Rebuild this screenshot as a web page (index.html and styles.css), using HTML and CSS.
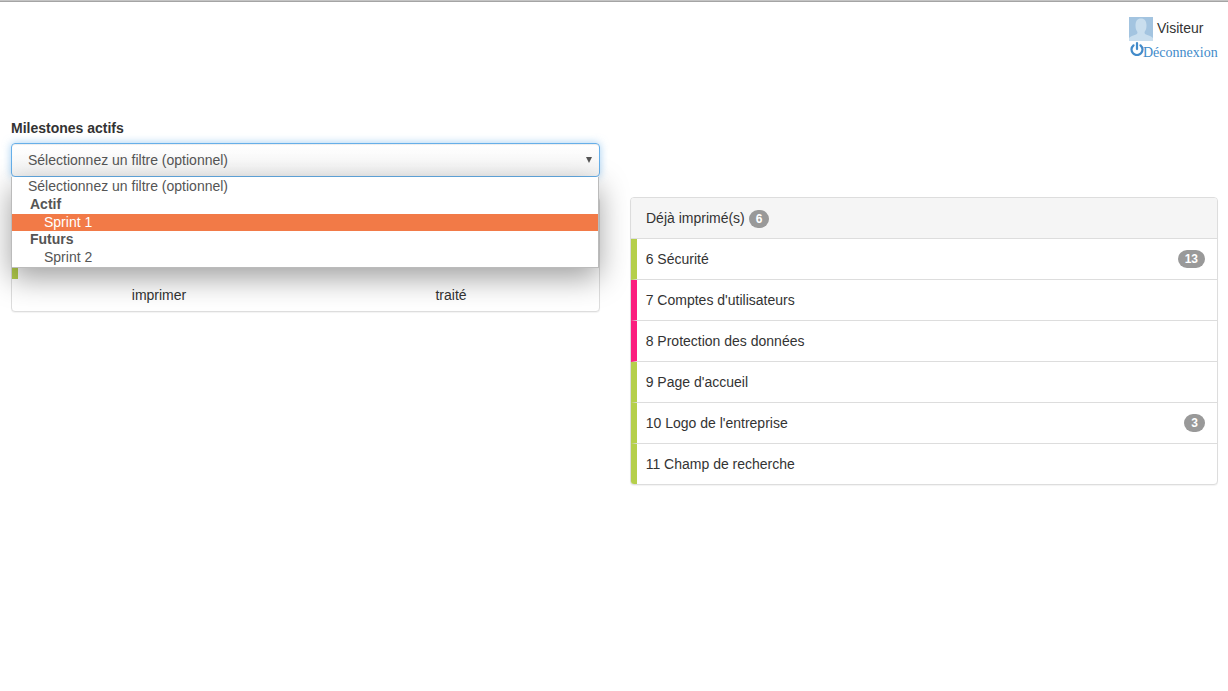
FILE: index.html
```html
<!DOCTYPE html>
<html lang="fr">
<head>
<meta charset="utf-8">
<title>Milestones</title>
<link rel="stylesheet" href="styles.css">
</head>
<body>
<header class="top">
  <div class="user">
    <div class="user-row">
      <svg class="avatar" viewBox="0 0 24 24" width="24" height="24"><rect width="24" height="24" fill="#a3c4e0"/><path d="M0 24v-3c1-1.500 4.500-2.500 7-3.500 1.500-.6 1.700-2 1.200-3C7 13 6.500 11 6.500 8.500 6.500 4 8.500 1.500 12 1.500s5.500 2.500 5.500 7c0 2.500-.5 4.500-1.700 6-.5 1-.3 2.400 1.200 3 2.500 1 6 2 7 3.500v3z" fill="#c9deee"/></svg>
      <span class="user-name">Visiteur</span>
    </div>
    <a class="logout" href="#"><svg class="power" viewBox="0 0 14 14" width="14" height="14"><path d="M3.500 3.300a5.500 5.500 0 1 0 7 0" fill="none" stroke="#428bca" stroke-width="2.200" stroke-linecap="round"/><path d="M7 1.100v6" fill="none" stroke="#428bca" stroke-width="2.200" stroke-linecap="round"/></svg>Déconnexion</a>
  </div>
</header>
<main class="columns">
  <section class="left">
    <label class="field-label">Milestones actifs</label>
    <div class="select-wrap">
      <div class="select">
        <span>Sélectionnez un filtre (optionnel)</span>
        <span class="caret"></span>
      </div>
      <ul class="dropdown">
        <li class="opt">Sélectionnez un filtre (optionnel)</li>
        <li class="group">Actif</li>
        <li class="opt sub active">Sprint 1</li>
        <li class="group">Futurs</li>
        <li class="opt sub">Sprint 2</li>
      </ul>
    </div>
    <div class="panel left-panel">
      <div class="left-body"><span class="left-bar"></span></div>
      <div class="left-foot"><span>imprimer</span><span>traité</span></div>
    </div>
  </section>
  <section class="right">
    <div class="panel">
      <div class="panel-head">Déjà imprimé(s) <span class="badge">6</span></div>
      <ul class="items">
        <li class="item green"><span>6 Sécurité</span><span class="badge">13</span></li>
        <li class="item pink"><span>7 Comptes d'utilisateurs</span></li>
        <li class="item pink"><span>8 Protection des données</span></li>
        <li class="item green"><span>9 Page d'accueil</span></li>
        <li class="item green"><span>10 Logo de l'entreprise</span><span class="badge">3</span></li>
        <li class="item green"><span>11 Champ de recherche</span></li>
      </ul>
    </div>
  </section>
</main>
</body>
</html>
```
FILE: styles.css
```css
* { box-sizing: border-box; }
html, body { margin: 0; padding: 0; }
body {
  height: 691px;
  overflow: hidden;
  background: #fff;
  color: #333;
  font: 14px/20px "Liberation Sans", Arial, sans-serif;
  border-top: 1px solid #c4c4c4;
}
.top {
  height: 114px;
  display: flex;
  justify-content: flex-end;
  padding: 15px 10px 0 0;
  border-top: 1px solid #a4a4a4;
}
.user { width: 89px; }
.user-row { display: flex; align-items: center; gap: 4px; height: 24px; }
.user-name { padding-bottom: 2px; }
.avatar { display: block; flex: none; }
.logout {
  display: flex;
  align-items: flex-start;
  color: #428bca;
  text-decoration: none;
  font-family: "Liberation Serif", serif;
  font-size: 14px;
  height: 20px;
  margin-top: 2px;
}
.power { flex: none; margin: -1px -1px 0 1px; }
.columns {
  display: grid;
  grid-template-columns: 589px 588px;
  column-gap: 30px;
  padding-left: 11px;
}
.left, .right { min-width: 0; }
.field-label { display: block; font-weight: 700; height: 28px; padding-top: 3px; }
.select-wrap { position: relative; height: 34px; }
.select {
  height: 34px;
  display: flex;
  align-items: center;
  justify-content: space-between;
  padding: 0 7px 0 16px;
  color: #555;
  border: 1px solid #66afe9;
  border-radius: 4px;
  background: linear-gradient(#fff, #f4f4f4);
  box-shadow: inset 0 1px 1px rgba(0,0,0,.075), 0 0 8px rgba(102,175,233,.6);
}
.caret {
  width: 0;
  height: 0;
  border-left: 3px solid transparent;
  border-right: 3px solid transparent;
  border-top: 6px solid #555;
}
.dropdown {
  position: absolute;
  z-index: 2;
  left: 0;
  right: 1px;
  top: 34px;
  margin: 0;
  padding: 1px 0 0;
  list-style: none;
  background: #fff;
  color: #555;
  border: 1px solid #bbb;
  border-top: 0;
  box-shadow: 0 10px 30px rgba(0,0,0,.38);
  height: 91px;
}
.opt, .group { height: 18px; line-height: 17px; padding-left: 16px; }
.group { padding-left: 18px; font-weight: 700; }
.sub { padding-left: 32px; }
.active { height: 17px; background: #f27a47; color: #fff; }
.panel {
  background: #fff;
  border: 1px solid #ddd;
  border-radius: 4px;
  box-shadow: 0 1px 1px rgba(0,0,0,.05);
  overflow: hidden;
}
.left-panel { margin-top: 20px; height: 115px; }
.left-body { height: 81px; position: relative; }
.left-bar {
  position: absolute;
  left: 0;
  bottom: 0;
  top: 0;
  width: 6px;
  background: #b5cf4b;
}
.left-foot { display: grid; grid-template-columns: 294px 290px; text-align: center; height: 32px; padding-top: 6px; }
.right { padding-top: 82px; }
.panel-head {
  height: 41px;
  background: #f5f5f5;
  border-bottom: 1px solid #ddd;
  padding: 10px 15px 0 15px;
}
.items { list-style: none; margin: 0; padding: 0; }
.item {
  height: 41px;
  border-bottom: 1px solid #ddd;
  border-left: 6px solid;
  display: flex;
  align-items: center;
  justify-content: space-between;
  padding: 0 12px 0 8.700px;
}
.item:last-child { border-bottom: 0; height: 40px; }
.green { border-left-color: #b5cf4b; }
.pink { border-left-color: #fb1f7e; }
.badge {
  display: inline-block;
  min-width: 10px;
  padding: 3px 7px;
  font-size: 12px;
  font-weight: 700;
  line-height: 12px;
  color: #fff;
  text-align: center;
  vertical-align: baseline;
  background: #999;
  border-radius: 10px;
}
```
